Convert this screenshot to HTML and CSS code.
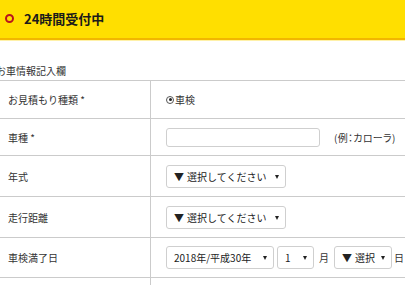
FILE: index.html
```html
<!DOCTYPE html>
<html lang="ja">
<head>
<meta charset="utf-8">
<title>24時間受付中</title>
<link rel="stylesheet" href="styles.css">
</head>
<body>
<header class="topbar">
  <span class="ring"></span>
  <span class="topbar-text">24時間受付中</span>
</header>
<main class="content">
  <h2 class="section-title">お車情報記入欄</h2>
  <div class="form">
    <div class="row row-radio">
      <div class="label">お見積もり種類 *</div>
      <div class="field">
        <label class="radio"><span class="radio-dot"></span>車検</label>
      </div>
    </div>
    <div class="row row-input">
      <div class="label">車種 *</div>
      <div class="field">
        <input class="text-input" type="text">
        <span class="example">(例：カローラ)</span>
      </div>
    </div>
    <div class="row row-select">
      <div class="label">年式</div>
      <div class="field">
        <div class="sel sel-wide"><span class="tri">▼</span>選択してください</div>
      </div>
    </div>
    <div class="row row-select">
      <div class="label">走行距離</div>
      <div class="field">
        <div class="sel sel-wide"><span class="tri">▼</span>選択してください</div>
      </div>
    </div>
    <div class="row row-select row-date">
      <div class="label">車検満了日</div>
      <div class="field field-date">
        <div class="sel sel-year">2018年/平成30年</div>
        <div class="sel sel-month">1</div>
        <span class="unit">月</span>
        <div class="sel sel-day"><span class="tri">▼</span>選択</div>
        <span class="unit unit-day">日</span>
      </div>
    </div>
    <div class="row row-select">
      <div class="label"></div>
      <div class="field"></div>
    </div>
  </div>
</main>
</body>
</html>
```
FILE: styles.css
```css
html, body {
  margin: 0;
  padding: 0;
  overflow: hidden;
  background: #fff;
}
body {
  font-family: "Noto Sans CJK JP", "Noto Sans", sans-serif;
  color: #333;
  font-size: 10px;
}
.topbar {
  height: 38px;
  background: #ffdf00;
  border-bottom: 2px solid #f2b600;
  box-shadow: 0 1px 0 #fff1a8;
  display: flex;
  align-items: center;
  padding-left: 5px;
  gap: 10px;
}
.ring {
  width: 5px;
  height: 5px;
  border: 2px solid #b8141c;
  border-radius: 50%;
  margin-top: -1px;
}
.topbar-text {
  font-size: 13px;
  font-weight: bold;
  color: #1a1a1a;
  line-height: 16px;
}
.content {
  margin-left: -5px;
  width: 440px;
}
.section-title {
  margin: 0;
  height: 40px;
  box-sizing: border-box;
  padding-top: 24px;
  padding-left: 1px;
  font-size: 10px;
  line-height: 14px;
  font-weight: normal;
  color: #333;
}
.form {
  border-top: 1px solid #cbcbcb;
}
.row {
  display: flex;
  border-bottom: 1px solid #cbcbcb;
}
.row-radio { height: 37px; }
.row-input { height: 36px; }
.row-select { height: 40px; }
.row-date { height: 39px; }
.label {
  width: 156px;
  box-sizing: border-box;
  border-right: 1px solid #cbcbcb;
  padding-left: 13px;
  display: flex;
  align-items: center;
}
.field {
  flex: 1;
  display: flex;
  align-items: center;
  padding-left: 15px;
}
.radio {
  display: flex;
  align-items: center;
  gap: 1px;
}
.radio-dot {
  width: 6px;
  height: 6px;
  border: 1px solid #555;
  border-radius: 50%;
  position: relative;
}
.radio-dot::after {
  content: "";
  position: absolute;
  left: 1.5px;
  top: 1.5px;
  width: 3px;
  height: 3px;
  border-radius: 50%;
  background: #222;
}
.text-input {
  width: 154px;
  height: 19px;
  box-sizing: border-box;
  border: 1px solid #cfcfcf;
  border-radius: 3px;
  margin: 0;
  padding: 0 4px;
  font: inherit;
}
.example {
  margin-left: 14px;
  font-feature-settings: "palt";
  letter-spacing: 0.3px;
}
.sel {
  position: relative;
  height: 23px;
  box-sizing: border-box;
  border: 1px solid #cfcfcf;
  border-radius: 3px;
  background: #fff;
  display: flex;
  align-items: center;
  padding-left: 7px;
  color: #222;
  white-space: nowrap;
}
.tri {
  margin-right: 3px;
}
.sel::after {
  content: "";
  position: absolute;
  right: 6px;
  top: 9px;
  border-left: 2px solid transparent;
  border-right: 2px solid transparent;
  border-top: 4px solid #222;
}
.sel-wide { width: 120px; }
.sel-year { width: 108px; }
.sel-month { width: 37px; margin-left: 3px; }
.sel-day { width: 58px; }
.unit { margin: 0 5px; }
.unit-day { margin: 0 0 0 2px; }
```
